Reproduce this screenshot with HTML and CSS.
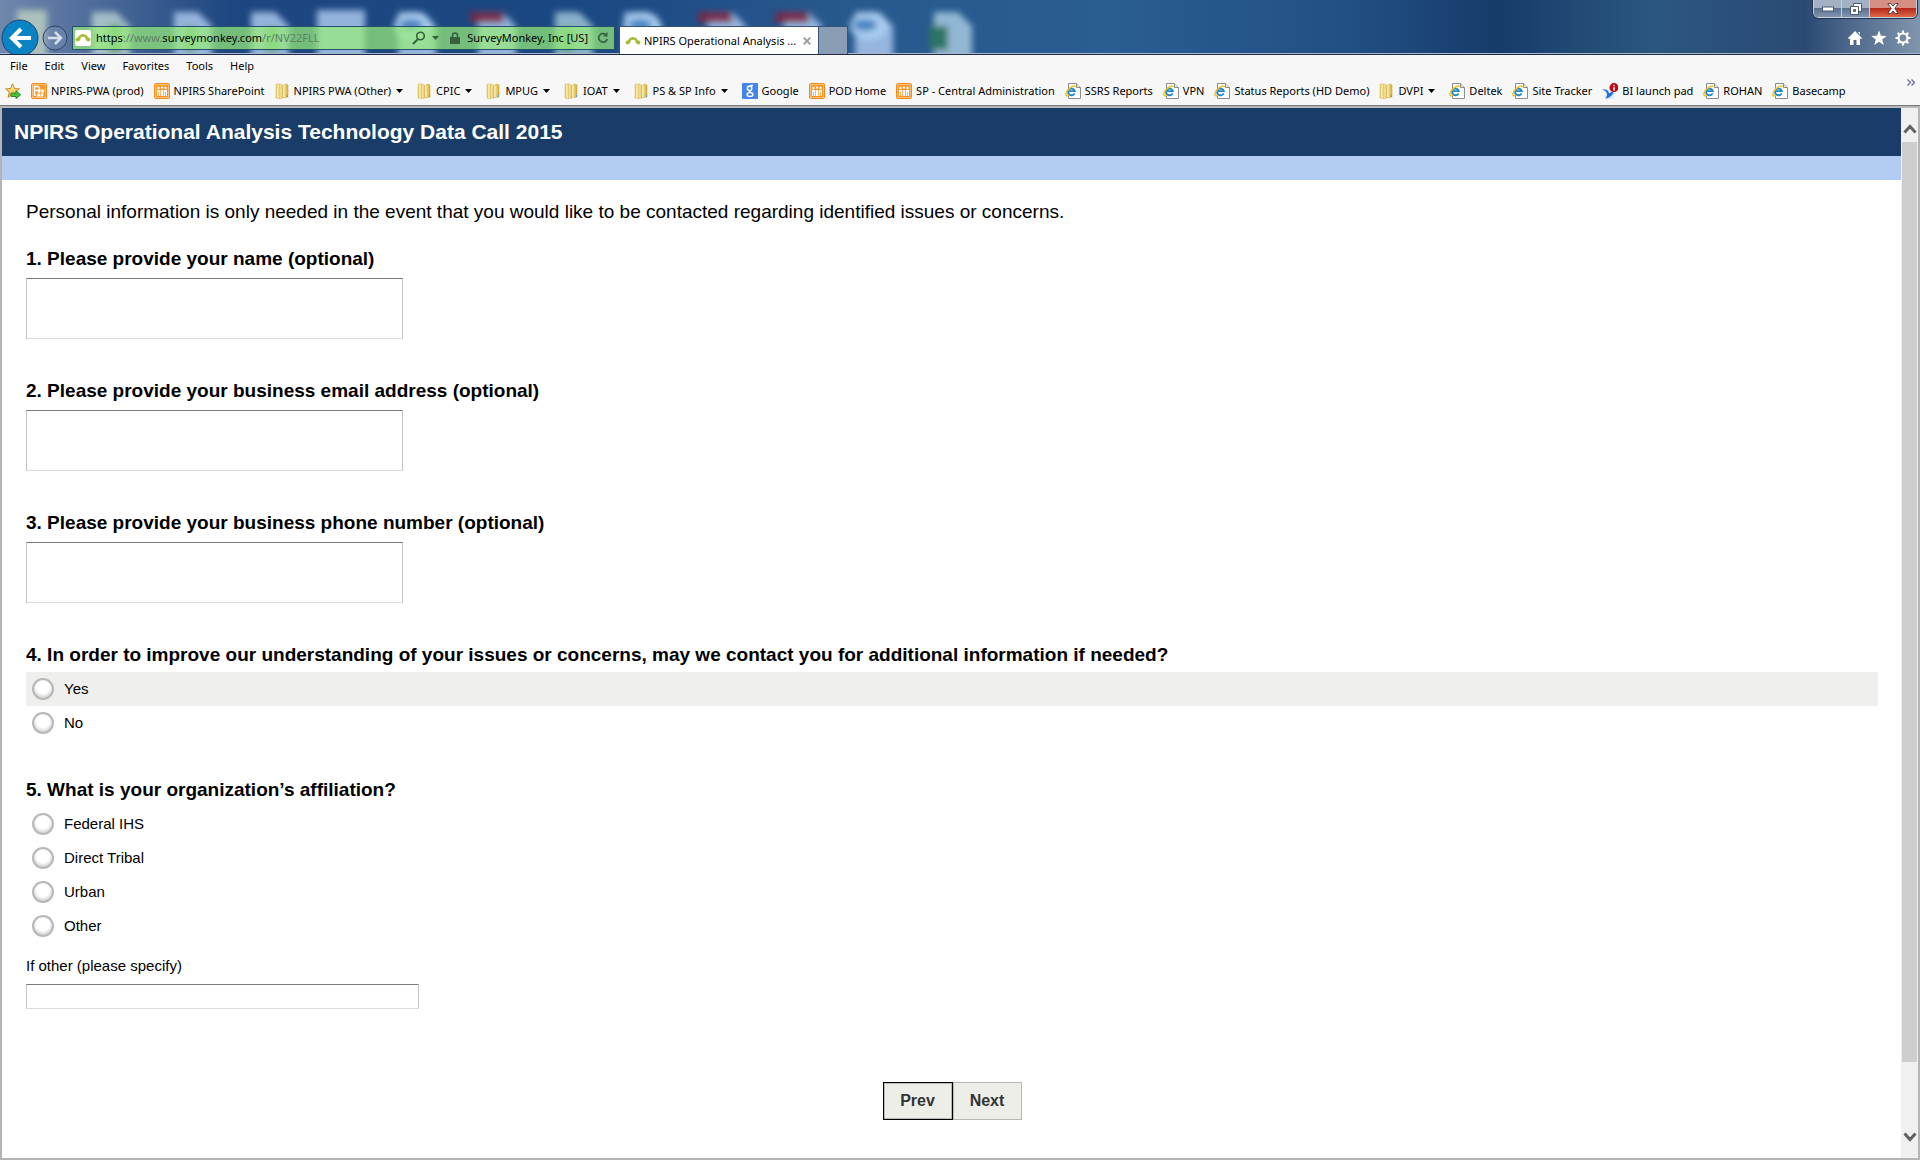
FILE: index.html
```html
<!DOCTYPE html>
<html lang="en">
<head>
<meta charset="utf-8">
<title>NPIRS Operational Analysis Technology Data Call 2015</title>
<link rel="stylesheet" href="styles.css">
</head>
<body>
<svg class="sprite" aria-hidden="true">
  <defs>
    <linearGradient id="gFolder"><stop offset="0" stop-color="#d9b84e"/><stop offset=".3" stop-color="#fdf3b4"/><stop offset=".55" stop-color="#e8cf74"/><stop offset="1" stop-color="#d2ab3a"/></linearGradient>
    <linearGradient id="gOrange" x2="1" y2="1"><stop offset="0" stop-color="#f9a13a"/><stop offset="1" stop-color="#ff8a12"/></linearGradient>
    <linearGradient id="gStar" x2="0" y2="1"><stop offset="0" stop-color="#fff3a0"/><stop offset="1" stop-color="#f3b93a"/></linearGradient>
    <symbol id="folder" viewBox="0 0 14 16">
      <path d="M1 1h5l1 1v13l-2 1-4-1z" fill="url(#gFolder)" stroke="#dcc26a" stroke-width=".6"/>
      <path d="M7 3l4-2 2 1v12l-6 1z" fill="url(#gFolder)" stroke="#cdaa45" stroke-width=".6"/>
      <path d="M6 1.500v13.500" stroke="#fffbe0"/><path d="M12.500 12v2" stroke="#5aa0dc"/>
    </symbol>
    <symbol id="ie" viewBox="0 0 16 16">
      <path d="M3.500.5h8l4 4v11h-12z" fill="#fff" stroke="#8c8c8c"/>
      <path d="M11.500.5v4h4" fill="#e8e8e8" stroke="#8c8c8c"/>
      <path d="M9.600 10.300a3.400 3.400 0 1 1 .2-2.200H4.200" fill="none" stroke="#1e88d2" stroke-width="1.900"/>
      <path d="M10.800 3.600C8 1.600 1.500 6.500.8 10.800.5 13.500 2.500 13.300 4.200 12" fill="none" stroke="#f2c21a" stroke-width="1.400"/>
    </symbol>
    <symbol id="sp" viewBox="0 0 16 16">
      <rect x=".5" y=".5" width="15" height="15" rx="1.500" fill="url(#gOrange)" stroke="#f58a1c"/>
      <rect x="1.500" y="1.500" width="13" height="13" fill="none" stroke="#fbc27c"/>
      <path d="M3 7h3v6H3zM6.700 7h2.600v6H6.700zM10 7h3v6h-3z" fill="#fff"/>
      <circle cx="4.500" cy="5" r="1.200" fill="#fff"/><circle cx="11.500" cy="5" r="1.200" fill="#fff"/><path d="M8 3l1.200 1.600L8 6.200 6.800 4.600z" fill="#fff"/>
      <path d="M4.500 9v4M11.500 9v4" stroke="#f9952b" stroke-width=".8"/>
    </symbol>
    <symbol id="pwa" viewBox="0 0 16 16">
      <rect x=".5" y=".5" width="15" height="15" rx="1.500" fill="url(#gOrange)" stroke="#f58a1c"/>
      <rect x="1.500" y="1.500" width="13" height="13" fill="none" stroke="#fbc27c"/>
      <path d="M3.500 12V3.500H6q2.500 0 2.500 2T6 7.500H4M3 12h2" fill="none" stroke="#fff" stroke-width="1.400"/>
      <path d="M7.500 6.500h6l-1.500 7H5.500z" fill="#fff"/><path d="M7 10h6M9.800 7v6" stroke="#f9952b" stroke-width=".8"/>
    </symbol>
    <symbol id="google" viewBox="0 0 16 16">
      <rect width="16" height="16" rx="1" fill="#4484f0"/>
      <g fill="none" stroke="#fff" stroke-width="1.500"><ellipse cx="7.600" cy="5.200" rx="2.200" ry="2.300"/><path d="M11 2.500H8.500M8 7.600c-1 .8-.4 1.300.6 1.800"/><ellipse cx="8" cy="11.500" rx="2.800" ry="2"/></g>
    </symbol>
    <symbol id="bi" viewBox="0 0 16 16">
      <path d="M4 6h8v10H4z" fill="#dcecf8"/>
      <path d="M0 6.500c5-.5 6.500 1 7 4L12 7.500C11 12 8 15 3 15.500 7 12 5 8 0 6.500z" fill="#1b6fe0"/>
      <circle cx="12" cy="4.600" r="4.500" fill="#c00a12"/><path d="M12 2v1.200M12 4.200v3.200" stroke="#fff" stroke-width="1.600"/>
    </symbol>
    <symbol id="addfav" viewBox="0 0 16 16">
      <path d="M7.500.8l2 4.700 5 .4-3.800 3.300 1.200 5-4.400-2.700-4.400 2.700 1.200-5L.6 5.900l5-.4z" fill="url(#gStar)" stroke="#c58a1e"/>
      <path d="M6 10h5V7.800l4.700 4-4.700 4v-2.300H6z" fill="#46c23c" stroke="#1d7d22" stroke-width=".8"/>
    </symbol>
    <symbol id="monkey" viewBox="0 0 16 16">
      <circle cx="2.500" cy="9.500" r="1.900" fill="#a9bd3a"/><circle cx="13.500" cy="9.500" r="1.900" fill="#a9bd3a"/>
      <path d="M3.800 10.500C3.400 3.600 12.600 3.600 12.200 10.500" fill="none" stroke="#a9bd3a" stroke-width="2.800"/>
    </symbol>
    <symbol id="down" viewBox="0 0 7 4"><path d="M0 0h7L3.500 4z" fill="currentColor"/></symbol>
  </defs>
</svg>

<header class="titlebar">
  <svg class="glass" aria-hidden="true">
    <defs>
      <linearGradient id="sky">
        <stop offset="0" stop-color="#7088ad"/><stop offset=".05" stop-color="#4d6b9a"/><stop offset=".12" stop-color="#1e4680"/><stop offset=".3" stop-color="#1a4882"/>
        <stop offset=".44" stop-color="#28598e"/><stop offset=".58" stop-color="#2a5d92"/><stop offset=".7" stop-color="#225085"/><stop offset=".78" stop-color="#163c6a"/>
        <stop offset=".86" stop-color="#2b577f"/><stop offset=".94" stop-color="#2a4a74"/><stop offset="1" stop-color="#8196ad"/>
      </linearGradient>
      <filter id="soft" x="-20%" y="-20%" width="140%" height="140%"><feGaussianBlur stdDeviation="3"/></filter>
      <path id="doc" d="M0 12h24l14 14v44H0z"/>
    </defs>
    <rect width="100%" height="54" fill="url(#sky)"/>
    <g filter="url(#soft)">
      <g fill="#a8c6ec" fill-opacity=".85">
        <path d="M17 10h30v60H17z" fill="#b9cdbf"/>
        <use href="#doc" x="92" fill="#b5cdd0"/><use href="#doc" x="174"/><use href="#doc" x="251"/>
        <path d="M317 10h48v60h-48z"/><use href="#doc" x="398"/><use href="#doc" x="478"/><use href="#doc" x="555" fill="#9dc3d6"/>
        <use href="#doc" x="624"/><use href="#doc" x="708"/><use href="#doc" x="784"/><use href="#doc" x="855"/><use href="#doc" x="934" fill="#a3c8de"/>
      </g>
      <g fill="#a8cdf0"><ellipse cx="413" cy="26" rx="19" ry="14"/><ellipse cx="642" cy="26" rx="19" ry="14"/><ellipse cx="869" cy="26" rx="19" ry="14"/></g>
      <g fill="#2f6fb4" fill-opacity=".8"><ellipse cx="411" cy="25" rx="12" ry="6"/><ellipse cx="640" cy="25" rx="12" ry="6"/><ellipse cx="865" cy="25" rx="12" ry="6"/></g>
      <g fill="#7c2440" fill-opacity=".9"><path d="M470 12h34v11h-34zM698 12h34v11h-34zM775 12h34v11h-34z"/></g>
      <path d="M108 24h14v30h-14zM184 26h12v26h-12zM265 27h14v26h-14zM560 27h14v26h-14z" fill="#4e9a4e" fill-opacity=".6"/>
      <path d="M930 26h18v24h-18z" fill="#2f7566"/>
    </g>
  </svg>

  <div class="nav">
    <button class="back" type="button" aria-label="Back"><svg width="38" height="38" viewBox="0 0 38 38"><circle cx="19" cy="19" r="18" fill="#0a83c4" stroke="#23456b"/><path d="M30 19H11M20 10l-9 9 9 9" fill="none" stroke="#fff" stroke-width="4"/></svg></button>
    <button class="forward" type="button" aria-label="Forward"><svg width="26" height="26" viewBox="0 0 26 26"><circle cx="13" cy="13" r="12" fill="#7890b4" fill-opacity=".45" stroke="#2b4366"/><path d="M6 13h13M13 7l6 6-6 6" fill="none" stroke="#d5deea" stroke-width="2.500"/></svg></button>
    <div class="address">
      <span class="site"><svg width="16" height="16"><use href="#monkey"/></svg></span>
      <span class="url">https<i>://www.</i>surveymonkey.com<i>/r/NV22FLL</i></span>
      <button type="button" aria-label="Search"><svg width="14" height="14" viewBox="0 0 14 14"><circle cx="8.500" cy="5" r="3.800" fill="none" stroke="#38603e" stroke-width="1.600"/><path d="M6 8l-5 5" stroke="#38603e" stroke-width="2"/></svg></button>
      <button type="button" aria-label="Address list"><svg width="7" height="4"><use href="#down"/></svg></button>
      <span class="lock"><svg width="10" height="12" viewBox="0 0 10 12"><path d="M2.500 6V3.500a2.500 2.500 0 0 1 5 0V6" fill="none" stroke="#38603e" stroke-width="1.600"/><path d="M0 5h10v7H0z" fill="#38603e"/></svg></span>
      <span>SurveyMonkey, Inc [US]</span>
      <button type="button" aria-label="Refresh"><svg width="12" height="12" viewBox="0 0 12 12"><path d="M8.500 2.300A4.300 4.300 0 1 0 10.200 7" fill="none" stroke="#38603e" stroke-width="1.700"/><path d="M6 4.500h4.500V0z" fill="#38603e"/></svg></button>
    </div>
    <div class="tab"><svg width="16" height="16"><use href="#monkey"/></svg><span>NPIRS Operational Analysis ...</span><button type="button" aria-label="Close tab"><svg width="8" height="8" viewBox="0 0 8 8"><path d="M.7.7l6.600 6.600M7.300.7L.7 7.300" stroke="#9a9a9a" stroke-width="1.900"/></svg></button></div>
    <button class="newtab" type="button" aria-label="New tab"></button>
  </div>

  <div class="corner">
    <div class="window">
      <button type="button" aria-label="Minimize"><svg width="12" height="6" viewBox="0 0 12 6"><rect x=".5" y="1" width="11" height="4" fill="#fff" stroke="#4c5a6e"/></svg></button>
      <button type="button" aria-label="Restore"><svg width="12" height="12" viewBox="0 0 12 12"><path d="M3.500.5h8v8h-8z" fill="#fff" stroke="#4c5a6e"/><path d="M.5 3.500h8v8h-8z" fill="#fff" stroke="#4c5a6e"/><path d="M3.500 6.500h2v2h-2z" fill="#8c9bb0" stroke="#4c5a6e"/></svg></button>
      <button class="close" type="button" aria-label="Close"><svg width="12" height="11" viewBox="0 0 12 11"><path d="M.8.5h3L6 3.200 8.200.5h3L7.800 5.500l3.400 5h-3L6 7.800l-2.200 2.700h-3l3.400-5z" fill="#fff" stroke="#5a3a40" stroke-width=".9"/></svg></button>
    </div>
    <div class="tools">
      <button type="button" aria-label="Home"><svg width="16" height="16" viewBox="0 0 16 16"><path d="M8 1l7 7-1 1.200-1-.8V15H9.500v-5h-3v5H3V8.400l-1 .8L1 8l7-7zM11 2h2v3z" fill="#fff"/></svg></button>
      <button type="button" aria-label="Favorites"><svg width="16" height="16" viewBox="0 0 16 16"><path d="M8 .5l2 5.300 5.700.2-4.500 3.500 1.600 5.500L8 11.800 3.200 15l1.600-5.500L.3 6 6 5.800z" fill="#fff"/></svg></button>
      <button type="button" aria-label="Settings"><svg width="16" height="16" viewBox="0 0 16 16"><circle cx="8" cy="8" r="4.500" fill="none" stroke="#fff" stroke-width="2.200"/><path d="M8 .5v3M8 12.500v3M.5 8h3M12.500 8h3M2.700 2.700l2 2M11.300 11.300l2 2M2.700 13.300l2-2M11.300 4.700l2-2" stroke="#fff" stroke-width="2.200"/></svg></button>
    </div>
  </div>
</header>

<div class="bars">
  <nav class="menu" aria-label="Menu">
    <button type="button">File</button><button type="button">Edit</button><button type="button">View</button><button type="button">Favorites</button><button type="button">Tools</button><button type="button">Help</button>
  </nav>
  <nav class="favorites" aria-label="Favorites bar">
    <button type="button" aria-label="Add to Favorites bar"><svg width="16" height="16"><use href="#addfav"/></svg></button>
    <a href="#"><svg width="16" height="16"><use href="#pwa"/></svg>NPIRS-PWA (prod)</a>
    <a href="#"><svg width="16" height="16"><use href="#sp"/></svg>NPIRS SharePoint</a>
    <button class="folder" type="button"><svg width="14" height="16"><use href="#folder"/></svg>NPIRS PWA (Other)<svg width="7" height="4"><use href="#down"/></svg></button>
    <button class="folder" type="button"><svg width="14" height="16"><use href="#folder"/></svg>CPIC<svg width="7" height="4"><use href="#down"/></svg></button>
    <button class="folder" type="button"><svg width="14" height="16"><use href="#folder"/></svg>MPUG<svg width="7" height="4"><use href="#down"/></svg></button>
    <button class="folder" type="button"><svg width="14" height="16"><use href="#folder"/></svg>IOAT<svg width="7" height="4"><use href="#down"/></svg></button>
    <button class="folder" type="button"><svg width="14" height="16"><use href="#folder"/></svg>PS &amp; SP Info<svg width="7" height="4"><use href="#down"/></svg></button>
    <a href="#"><svg width="16" height="16"><use href="#google"/></svg>Google</a>
    <a href="#"><svg width="16" height="16"><use href="#sp"/></svg>POD Home</a>
    <a href="#"><svg width="16" height="16"><use href="#sp"/></svg>SP - Central Administration</a>
    <a href="#"><svg width="16" height="16"><use href="#ie"/></svg>SSRS Reports</a>
    <a href="#"><svg width="16" height="16"><use href="#ie"/></svg>VPN</a>
    <a href="#"><svg width="16" height="16"><use href="#ie"/></svg>Status Reports (HD Demo)</a>
    <button class="folder" type="button"><svg width="14" height="16"><use href="#folder"/></svg>DVPI<svg width="7" height="4"><use href="#down"/></svg></button>
    <a href="#"><svg width="16" height="16"><use href="#ie"/></svg>Deltek</a>
    <a href="#"><svg width="16" height="16"><use href="#ie"/></svg>Site Tracker</a>
    <a href="#"><svg width="16" height="16"><use href="#bi"/></svg>BI launch pad</a>
    <a href="#"><svg width="16" height="16"><use href="#ie"/></svg>ROHAN</a>
    <a href="#"><svg width="16" height="16"><use href="#ie"/></svg>Basecamp</a>
    <button class="more" type="button" aria-label="More favorites"><svg width="8" height="7" viewBox="0 0 8 7"><path d="M.5.5l3 3-3 3M4.500.5l3 3-3 3" fill="none" stroke="#6a6aa8" stroke-width="1.300"/></svg></button>
  </nav>
</div>

<div class="viewport">
  <main class="page">
    <h1>NPIRS Operational Analysis Technology Data Call 2015</h1>
    <div class="band"></div>
    <form class="survey">
      <p class="intro">Personal information is only needed in the event that you would like to be contacted regarding identified issues or concerns.</p>
      <div class="question"><label class="ask" for="q1">1. Please provide your name (optional)</label><textarea id="q1"></textarea></div>
      <div class="question"><label class="ask" for="q2">2. Please provide your business email address (optional)</label><textarea id="q2"></textarea></div>
      <div class="question"><label class="ask" for="q3">3. Please provide your business phone number (optional)</label><textarea id="q3"></textarea></div>
      <fieldset>
        <legend class="ask">4. In order to improve our understanding of your issues or concerns, may we contact you for additional information if needed?</legend>
        <label class="option shaded"><input type="radio" name="contact">Yes</label>
        <label class="option"><input type="radio" name="contact">No</label>
      </fieldset>
      <fieldset>
        <legend class="ask">5. What is your organization’s affiliation?</legend>
        <label class="option"><input type="radio" name="org">Federal IHS</label>
        <label class="option"><input type="radio" name="org">Direct Tribal</label>
        <label class="option"><input type="radio" name="org">Urban</label>
        <label class="option"><input type="radio" name="org">Other</label>
        <label class="other" for="other">If other (please specify)</label>
        <input class="line" id="other" type="text">
      </fieldset>
      <div class="actions"><button class="focused" type="button">Prev</button><button type="button">Next</button></div>
    </form>
  </main>
  <div class="scrollbar" aria-hidden="true">
    <div class="arrow up"><svg width="14" height="10" viewBox="0 0 14 10"><path d="M1.500 8.500L7 2.500l5.500 6" fill="none" stroke="#606060" stroke-width="3"/></svg></div>
    <div class="thumb"></div>
    <div class="track"></div>
    <div class="arrow"><svg width="14" height="10" viewBox="0 0 14 10"><path d="M1.500 1.500L7 7.500l5.500-6" fill="none" stroke="#606060" stroke-width="3"/></svg></div>
  </div>
</div>
</body>
</html>
```
FILE: styles.css
```css
* { box-sizing: border-box; }
body {
  margin: 0;
  min-height: 100vh;
  display: flex;
  flex-direction: column;
  font-family: "Liberation Sans", Arial, sans-serif;
  color: #000;
  background: #fff;
}
svg { display: block; flex: none; }
button { margin: 0; padding: 0; border: 0; background: none; font: inherit; color: inherit; }
.sprite { position: absolute; width: 0; height: 0; }

/* Window frame */
.titlebar {
  position: relative;
  display: flex;
  justify-content: space-between;
  height: 55px;
  overflow: hidden;
  border-bottom: 1px solid #1d2c44;
  box-shadow: inset 0 -1px #a9b8d0;
  font: 11px/16px "Noto Sans", "Open Sans", sans-serif;
}
.glass { position: absolute; inset: 0; width: 100%; height: 53px; z-index: -1; }
.nav { display: flex; align-items: flex-end; flex: 0 1 848px; min-width: 0; padding-left: 1px; }
.back { height: 35px; overflow: hidden; }
.forward { margin: 0 4px 3px 3px; }
.address {
  display: flex;
  align-items: center;
  flex: 1;
  height: 24px;
  margin: 0 4px 4px 0;
  padding: 0 5px 0 2px;
  border: 1px solid #24506a;
  background: rgba(154, 239, 121, .7);
}
.site { padding: 0; margin-right: 5px; background: #fff; border-radius: 2px; }
.url { flex: 1; }
.url i { font-style: normal; color: #5f7d66; }
.address button + button { margin: 0 11px 0 6px; color: #38603e; }
.lock { margin-right: 7px; }
.address span + button:last-child { margin-left: 9px; }
.tab {
  display: flex;
  align-items: center;
  gap: 3px;
  width: 200px;
  height: 28px;
  padding-left: 5px;
  border: 1px solid #35547c;
  border-bottom: 0;
  background: #fff;
}
.tab span { width: 156px; }
.newtab { width: 29px; height: 28px; border: 1px solid #35547c; border-left: 0; border-bottom: 0; background: #8b9db5; }
.corner { display: flex; flex-direction: column; justify-content: space-between; align-items: flex-end; padding: 0 3px 8px 0; }
.window { display: flex; border: 1px solid #c6d0dc; border-top: 0; border-radius: 0 0 5px 5px; overflow: hidden; outline: 1px solid #24344c; }
.window button {
  display: grid;
  place-items: center;
  width: 28px;
  height: 17px;
  border-right: 1px solid #c6d0dc;
  background: linear-gradient(#a3b1c4 45%, #5b7190 50%, #8095b2);
}
.window .close { width: 46px; border: 0; background: linear-gradient(#d68f83 45%, #b5281c 50%, #dc6a48); }
.tools { display: flex; gap: 8px; padding-right: 6px; }

/* Menu and favorites bars */
.bars {
  font: 11px/16px "Noto Sans", "Open Sans", sans-serif;
  background: #f7f7f7;
  border-bottom: 1px solid #777;
  box-shadow: 0 2px #b9b9b9;
}
.menu { display: flex; gap: 17px; height: 22px; padding: 2px 10px; }
.favorites { display: flex; align-items: center; gap: 10px; height: 28px; padding: 0 5px; white-space: nowrap; }
.favorites a, .folder { display: flex; align-items: center; gap: 4px; color: #000; text-decoration: none; }
.folder { gap: 5px; padding-right: 4px; }
.more { margin-left: auto; align-self: flex-start; padding-top: 2px; }

/* Survey page */
.viewport { display: flex; flex: 1; margin-top: 2px; border: solid #b4b4b4; border-width: 0 2px 2px; }
.page { flex: 1; min-width: 0; }
h1 { margin: 0; padding: 0 12px; font-size: 21px; line-height: 48px; color: #fff; background: #193d68; }
.band { height: 24px; background: #b2ccf3; }
.survey { padding: 20px 23px 38px 24px; }
.intro { margin: 0 0 23px; font-size: 19px; line-height: 24px; }
.question { margin-bottom: 40px; }
.ask { display: block; padding: 0; font-size: 19px; font-weight: bold; line-height: 24px; }
textarea, .line {
  display: block;
  border: 1px solid #c3c3c3;
  border-top-color: #7b7b7b;
  border-bottom-color: #dcdcdc;
  background: #fff;
}
textarea { width: 377px; height: 61px; margin-top: 7px; resize: none; }
fieldset { margin: 0 0 38px; padding: 0; border: 0; min-width: 0; font-size: 15px; line-height: 20px; }
fieldset .ask { margin-bottom: 5px; }
.option { display: flex; align-items: center; gap: 10px; height: 34px; padding-left: 6px; }
.shaded { background: #efefed; }
.option input {
  appearance: none;
  width: 22px;
  height: 22px;
  margin: 0;
  border: 2px solid #b8b8b8;
  border-radius: 50%;
  background: radial-gradient(circle at 50% 40%, #fff 45%, #d4d4d4 75%);
}
.other { display: block; margin: 13px 0 8px; }
.line { width: 393px; height: 25px; }
.actions { display: flex; justify-content: center; padding-top: 35px; }
.actions button {
  width: 69px;
  height: 38px;
  border: 1px solid #b8b8b8;
  background: #eeeee9;
  color: #333;
  font-size: 16px;
  font-weight: bold;
}
.actions .focused { width: 70px; border-color: #000; box-shadow: inset 0 0 0 1px #b8b8b8; }

.scrollbar { display: flex; flex-direction: column; width: 17px; background: #f0f0f0; }
.arrow { display: grid; place-items: center; height: 34px; padding-bottom: 8px; }
.arrow.up { padding: 8px 0 0; }
.thumb { flex: 920; margin: 0 1px; background: #cdcdcd; }
.track { flex: 62; }
```
